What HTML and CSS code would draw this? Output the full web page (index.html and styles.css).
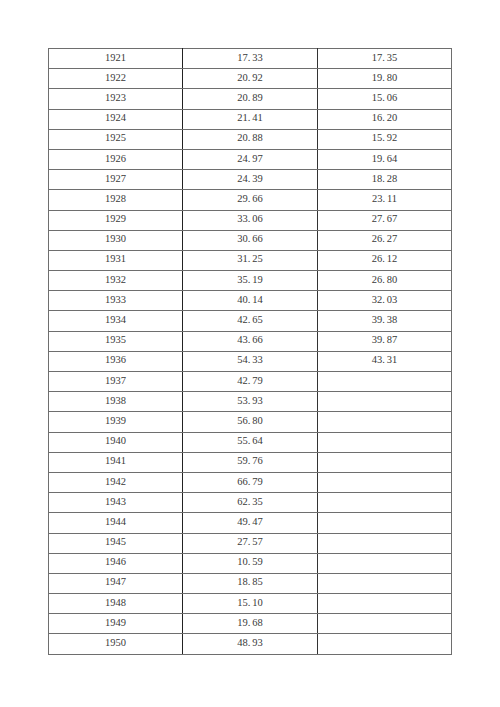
FILE: index.html
```html
<!DOCTYPE html>
<html>
<head>
<meta charset="utf-8">
<link rel="stylesheet" href="styles.css">
</head>
<body>
<div class="page">
<table class="data">
<tbody>
<tr><td>1921</td><td>17<span class="dot">.</span>33</td><td>17<span class="dot">.</span>35</td></tr>
<tr><td>1922</td><td>20<span class="dot">.</span>92</td><td>19<span class="dot">.</span>80</td></tr>
<tr><td>1923</td><td>20<span class="dot">.</span>89</td><td>15<span class="dot">.</span>06</td></tr>
<tr><td>1924</td><td>21<span class="dot">.</span>41</td><td>16<span class="dot">.</span>20</td></tr>
<tr><td>1925</td><td>20<span class="dot">.</span>88</td><td>15<span class="dot">.</span>92</td></tr>
<tr class="dark"><td>1926</td><td>24<span class="dot">.</span>97</td><td>19<span class="dot">.</span>64</td></tr>
<tr><td>1927</td><td>24<span class="dot">.</span>39</td><td>18<span class="dot">.</span>28</td></tr>
<tr><td>1928</td><td>29<span class="dot">.</span>66</td><td>23<span class="dot">.</span>11</td></tr>
<tr><td>1929</td><td>33<span class="dot">.</span>06</td><td>27<span class="dot">.</span>67</td></tr>
<tr><td>1930</td><td>30<span class="dot">.</span>66</td><td>26<span class="dot">.</span>27</td></tr>
<tr class="dark"><td>1931</td><td>31<span class="dot">.</span>25</td><td>26<span class="dot">.</span>12</td></tr>
<tr><td>1932</td><td>35<span class="dot">.</span>19</td><td>26<span class="dot">.</span>80</td></tr>
<tr><td>1933</td><td>40<span class="dot">.</span>14</td><td>32<span class="dot">.</span>03</td></tr>
<tr><td>1934</td><td>42<span class="dot">.</span>65</td><td>39<span class="dot">.</span>38</td></tr>
<tr><td>1935</td><td>43<span class="dot">.</span>66</td><td>39<span class="dot">.</span>87</td></tr>
<tr><td>1936</td><td>54<span class="dot">.</span>33</td><td>43<span class="dot">.</span>31</td></tr>
<tr><td>1937</td><td>42<span class="dot">.</span>79</td><td></td></tr>
<tr><td>1938</td><td>53<span class="dot">.</span>93</td><td></td></tr>
<tr><td>1939</td><td>56<span class="dot">.</span>80</td><td></td></tr>
<tr><td>1940</td><td>55<span class="dot">.</span>64</td><td></td></tr>
<tr><td>1941</td><td>59<span class="dot">.</span>76</td><td></td></tr>
<tr><td>1942</td><td>66<span class="dot">.</span>79</td><td></td></tr>
<tr><td>1943</td><td>62<span class="dot">.</span>35</td><td></td></tr>
<tr><td>1944</td><td>49<span class="dot">.</span>47</td><td></td></tr>
<tr><td>1945</td><td>27<span class="dot">.</span>57</td><td></td></tr>
<tr><td>1946</td><td>10<span class="dot">.</span>59</td><td></td></tr>
<tr><td>1947</td><td>18<span class="dot">.</span>85</td><td></td></tr>
<tr><td>1948</td><td>15<span class="dot">.</span>10</td><td></td></tr>
<tr><td>1949</td><td>19<span class="dot">.</span>68</td><td></td></tr>
<tr><td>1950</td><td>48<span class="dot">.</span>93</td><td></td></tr>
</tbody>
</table>
</div>
</body>
</html>
```
FILE: styles.css
```css
html, body {
  margin: 0;
  padding: 0;
  background: #ffffff;
}
.page {
  padding: 48px 0 0 48px;
}
.data {
  border-collapse: collapse;
  width: 404px;
  table-layout: fixed;
  font-family: "Liberation Serif", "DejaVu Serif", serif;
  font-size: 10.5px;
  color: #3a3a3a;
}
.data td {
  height: 16.2px;
  padding: 0 0 3px 0;
  text-align: center;
  vertical-align: middle;
  border: 1px solid #6e6e6e;
}
.data td:first-child {
  width: 133px;
  border-right: 1.5px solid #222;
}
.data td:nth-child(2) {
  width: 134px;
  border-right: 1px solid #333;
}
.data tr.dark td {
  border-top: 1px solid #333;
}
.dot {
  margin-right: 2px;
}
```
